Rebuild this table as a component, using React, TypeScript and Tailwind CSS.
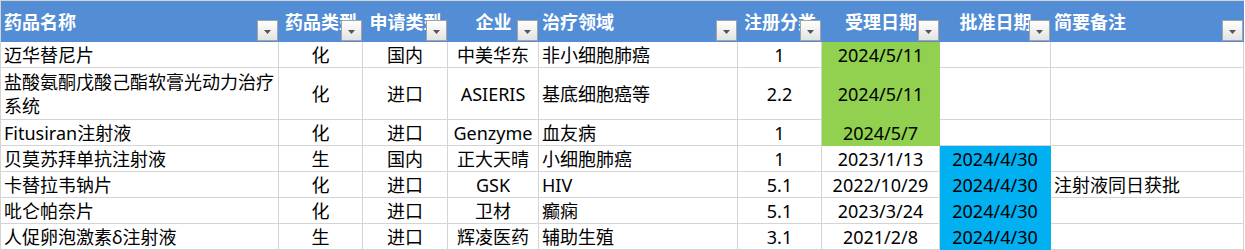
import React from "react";

type Fill = "none" | "green" | "blue";

const colWidths = "grid-cols-[278px_84px_85px_91px_199px_84px_118px_111px_193px]";

const headers = ["药品名称", "药品类型", "申请类型", "企业", "治疗领域", "注册分类", "受理日期", "批准日期", "简要备注"];
const leftCols = [0, 4, 8];

const rows: { cells: string[]; fills: Fill[]; tall?: boolean }[] = [
  { cells: ["迈华替尼片", "化", "国内", "中美华东", "非小细胞肺癌", "1", "2024/5/11", "", ""], fills: ["none", "none", "none", "none", "none", "none", "green", "none", "none"] },
  { cells: ["盐酸氨酮戊酸己酯软膏光动力治疗系统", "化", "进口", "ASIERIS", "基底细胞癌等", "2.2", "2024/5/11", "", ""], fills: ["none", "none", "none", "none", "none", "none", "green", "none", "none"], tall: true },
  { cells: ["Fitusiran注射液", "化", "进口", "Genzyme", "血友病", "1", "2024/5/7", "", ""], fills: ["none", "none", "none", "none", "none", "none", "green", "none", "none"] },
  { cells: ["贝莫苏拜单抗注射液", "生", "国内", "正大天晴", "小细胞肺癌", "1", "2023/1/13", "2024/4/30", ""], fills: ["none", "none", "none", "none", "none", "none", "none", "blue", "none"] },
  { cells: ["卡替拉韦钠片", "化", "进口", "GSK", "HIV", "5.1", "2022/10/29", "2024/4/30", "注射液同日获批"], fills: ["none", "none", "none", "none", "none", "none", "none", "blue", "none"] },
  { cells: ["吡仑帕奈片", "化", "进口", "卫材", "癫痫", "5.1", "2023/3/24", "2024/4/30", ""], fills: ["none", "none", "none", "none", "none", "none", "none", "blue", "none"] },
  { cells: ["人促卵泡激素δ注射液", "生", "进口", "辉凌医药", "辅助生殖", "3.1", "2021/2/8", "2024/4/30", ""], fills: ["none", "none", "none", "none", "none", "none", "none", "blue", "none"] },
];

function FilterButton() {
  return (
    <div className="absolute right-px bottom-px w-[21px] h-[21px] border border-[#a3a3a3] bg-gradient-to-b from-white to-[#e3e3e3] flex items-center justify-center">
      <svg width="7" height="4" viewBox="0 0 7 4" className="mt-[2px]">
        <path d="M0 0 L7 0 L3.5 4 Z" fill="#555555" />
      </svg>
    </div>
  );
}

function fillClass(f: Fill) {
  if (f === "green") return "bg-[#92d050] border-[#92d050]";
  if (f === "blue") return "bg-[#00b0f0] border-[#00b0f0]";
  return "bg-white border-[#d4d4d4]";
}

export default function App() {
  return (
    <div className="w-[1245px] h-[250px] bg-white overflow-hidden font-['Noto_Sans','Noto_Sans_CJK_SC',sans-serif] text-[18px] leading-[24px] text-black">
      <div className="w-[1244px] border-t border-l border-[#d4d4d4]">
        <div className={`grid ${colWidths} h-[41px] bg-[#538dd5]`}>
          {headers.map((h, i) => (
            <div
              key={i}
              className={`relative h-[41px] flex items-center font-bold text-white whitespace-nowrap overflow-visible ${leftCols.includes(i) ? "justify-start pl-[3px]" : "justify-center"}`}
            >
              <span>{h}</span>
              <FilterButton />
            </div>
          ))}
        </div>
        {rows.map((r, ri) => (
          <div key={ri} className={`grid ${colWidths} ${r.tall ? "h-[52px]" : "h-[26px]"}`}>
            {r.cells.map((c, ci) => (
              <div
                key={ci}
                className={`border-r border-b flex items-center ${fillClass(r.fills[ci])} ${leftCols.includes(ci) ? "justify-start pl-[3px]" : "justify-center whitespace-nowrap"}`}
              >
                <span className={ci === 0 ? "block w-full break-all" : ""}>{c}</span>
              </div>
            ))}
          </div>
        ))}
      </div>
    </div>
  );
}
